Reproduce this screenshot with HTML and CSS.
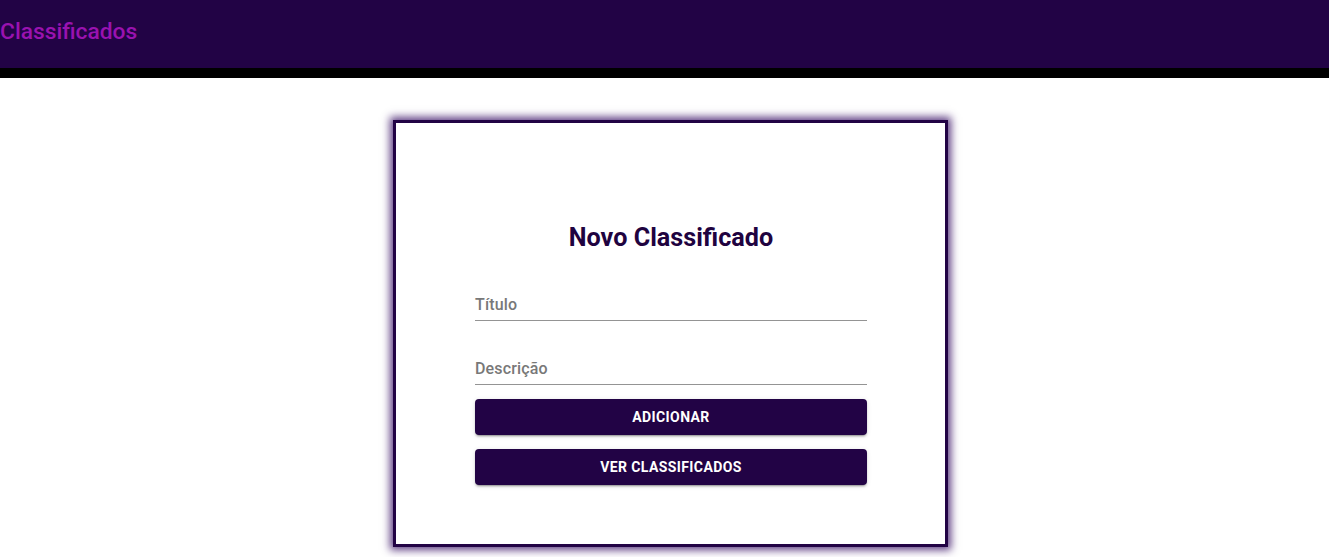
FILE: index.html
```html
<!DOCTYPE html>
<html lang="pt">
<head>
<meta charset="utf-8">
<title>Classificados</title>
<link rel="stylesheet" href="styles.css">
</head>
<body>
<header class="appbar">
  <div class="appbar-inner">
    <h1 class="brand">Classificados</h1>
  </div>
</header>
<main class="page">
  <section class="card">
    <h2 class="card-title">Novo Classificado</h2>
    <form class="form">
      <label class="field field-first">
        <span class="field-label">Título</span>
      </label>
      <label class="field">
        <span class="field-label">Descrição</span>
      </label>
      <button type="button" class="btn">Adicionar</button>
      <button type="button" class="btn">Ver classificados</button>
    </form>
  </section>
</main>
</body>
</html>
```
FILE: styles.css
```css
* { box-sizing: border-box; }
html, body { margin: 0; padding: 0; }
body {
  font-family: Roboto, "Liberation Sans", sans-serif;
  background: #ffffff;
  width: 1329px;
  height: 557px;
  overflow: hidden;
}
.appbar {
  background: #220345;
  border-bottom: 10px solid #000000;
}
.appbar-inner {
  height: 68px;
  display: flex;
  align-items: center;
}
.brand {
  margin: 0;
  font-size: 22.8px;
  font-weight: 500;
  letter-spacing: 0;
  color: #9a12b0;
  line-height: 32px;
  padding-bottom: 5px;
}
.page {
  display: flex;
  justify-content: center;
  padding-left: 12px;
  padding-top: 42px;
}
.card {
  width: 555px;
  height: 427px;
  border: 3px solid #220345;
  box-shadow: 0 0 8px 3px rgba(55, 15, 100, 0.8);
  background: #fff;
  padding: 99px 78px 0 79px;
}
.card-title {
  margin: 0;
  text-align: center;
  font-size: 25.2px;
  line-height: 32px;
  font-weight: 700;
  color: #1f0340;
}
.form {
  display: flex;
  flex-direction: column;
}
.field {
  display: block;
  border-bottom: 1px solid #949494;
  padding-bottom: 3px;
  margin-top: 35px;
}
.field-first { margin-top: 38px; }
.field-label {
  display: block;
  font-size: 16px;
  line-height: 24px;
  padding-top: 1px;
  color: #787878;
  font-weight: 500;
  letter-spacing: 0.15px;
}
.btn {
  height: 36px;
  margin-top: 14px;
  border: 0;
  border-radius: 4px;
  background: #220345;
  color: #ffffff;
  font-family: Roboto, "Liberation Sans", sans-serif;
  font-size: 14px;
  font-weight: 700;
  letter-spacing: 0.4px;
  text-transform: uppercase;
  box-shadow: 0 3px 1px -2px rgba(0,0,0,0.2), 0 2px 2px 0 rgba(0,0,0,0.14), 0 1px 5px 0 rgba(0,0,0,0.12);
  cursor: pointer;
}
```
